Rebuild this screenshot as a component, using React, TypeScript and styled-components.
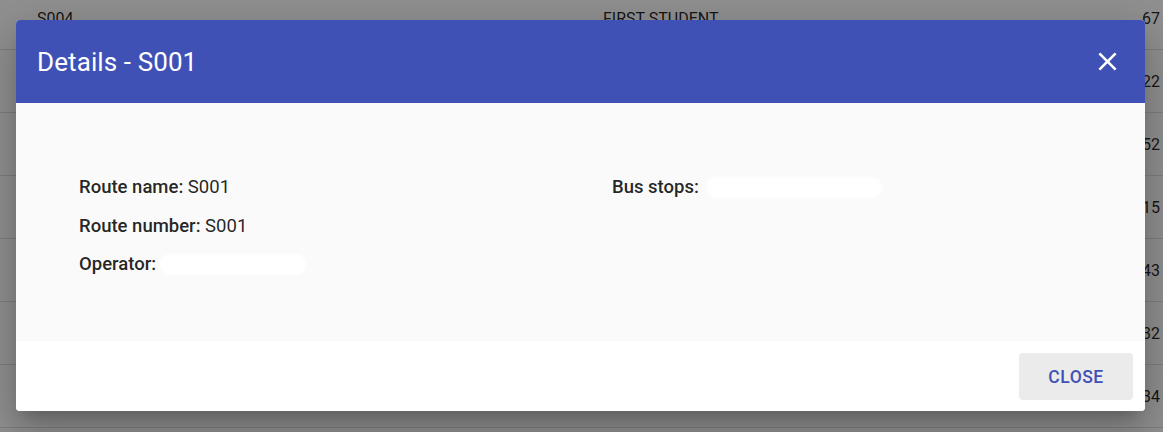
import React from "react";
import styled, { createGlobalStyle } from "styled-components";

const Global = createGlobalStyle`
  html, body { margin: 0; padding: 0; background: #fff; overflow: hidden; }
  body { font-family: Roboto, "Liberation Sans", sans-serif; }
`;

const Table = styled.div`
  margin-top: -13px;
  display: flex;
  flex-direction: column;
`;

const Row = styled.div`
  height: 62px;
  border-bottom: 1px solid #e0e0e0;
  display: grid;
  grid-template-columns: 566px 1fr 120px;
  align-items: center;
  padding: 0 3px 0 37px;
  font-size: 16px;
  color: rgba(0, 0, 0, 0.87);
`;

const Num = styled.span`
  text-align: right;
`;

const Overlay = styled.div`
  position: fixed;
  inset: 0;
  background: rgba(0, 0, 0, 0.44);
  display: flex;
  padding: 20px 18px 21px 16px;
`;

const Dialog = styled.div`
  flex: 1;
  display: flex;
  flex-direction: column;
  background: #fff;
  border-radius: 4px;
  overflow: hidden;
  box-shadow: 0 11px 15px -7px rgba(0, 0, 0, 0.2), 0 24px 38px 3px rgba(0, 0, 0, 0.14),
    0 9px 46px 8px rgba(0, 0, 0, 0.12);
`;

const Header = styled.div`
  height: 83px;
  flex: none;
  background: #3f51b5;
  display: flex;
  align-items: center;
  justify-content: space-between;
  padding: 0 22px 0 21px;
`;

const Title = styled.h2`
  margin: 0;
  font-size: 26px;
  font-weight: 400;
  color: #fff;
  letter-spacing: 0.1px;
`;

const IconButton = styled.button`
  border: 0;
  background: transparent;
  padding: 0;
  width: 31px;
  height: 31px;
  display: flex;
  align-items: center;
  justify-content: center;
  cursor: pointer;
`;

const Body = styled.div`
  flex: 1;
  background: #fafafa;
  padding: 73px 63px 0 63px;
  display: grid;
  grid-template-columns: 533px 1fr;
  align-content: start;
`;

const Column = styled.div`
  display: flex;
  flex-direction: column;
  gap: 16.5px;
`;

const Field = styled.div`
  font-size: 18.5px;
  line-height: 22px;
  height: 22px;
  color: rgba(0, 0, 0, 0.87);
  display: flex;
  align-items: center;
  white-space: pre;
`;

const Label = styled.span`
  font-weight: 500;
`;

const Redacted = styled.span<{ $w: number; $gap: number }>`
  display: inline-block;
  width: ${(p) => p.$w}px;
  height: 21px;
  margin-left: ${(p) => p.$gap}px;
  background: #fff;
  border-radius: 10px;
  filter: blur(1.5px);
`;

const Footer = styled.div`
  height: 70px;
  flex: none;
  background: #fff;
  display: flex;
  justify-content: flex-end;
  align-items: flex-start;
  padding: 12px 12px 0 0;
  box-sizing: border-box;
`;

const CloseButton = styled.button`
  width: 114px;
  height: 47px;
  border: 0;
  border-radius: 4px;
  background: #ebebeb;
  color: #3f51b5;
  font-family: Roboto, "Liberation Sans", sans-serif;
  font-size: 17.5px;
  font-weight: 500;
  letter-spacing: 0.5px;
  cursor: pointer;
`;

const rows = [
  ["S004", "FIRST STUDENT", "67"],
  ["", "", "22"],
  ["", "", "52"],
  ["", "", "15"],
  ["", "", "43"],
  ["", "", "32"],
  ["", "", "34"],
];

export default function App() {
  return (
    <>
      <Global />
      <Table>
        {rows.map((r) => (
          <Row key={r[2]}>
            <span>{r[0]}</span>
            <span>{r[1]}</span>
            <Num>{r[2]}</Num>
          </Row>
        ))}
      </Table>
      <Overlay>
        <Dialog>
          <Header>
            <Title>Details - S001</Title>
            <IconButton aria-label="close">
              <svg width="31" height="31" viewBox="0 0 24 24" fill="#fff">
                <path d="M19 6.41L17.59 5 12 10.59 6.41 5 5 6.41 10.59 12 5 17.59 6.41 19 12 13.41 17.59 19 19 17.59 13.41 12z" />
              </svg>
            </IconButton>
          </Header>
          <Body>
            <Column>
              <Field>
                <Label>Route name:</Label> S001
              </Field>
              <Field>
                <Label>Route number:</Label> S001
              </Field>
              <Field>
                <Label>Operator:</Label> <Redacted $w={146} $gap={4} />
              </Field>
            </Column>
            <Column>
              <Field>
                <Label>Bus stops:</Label> <Redacted $w={176} $gap={7} />
              </Field>
            </Column>
          </Body>
          <Footer>
            <CloseButton>CLOSE</CloseButton>
          </Footer>
        </Dialog>
      </Overlay>
    </>
  );
}
